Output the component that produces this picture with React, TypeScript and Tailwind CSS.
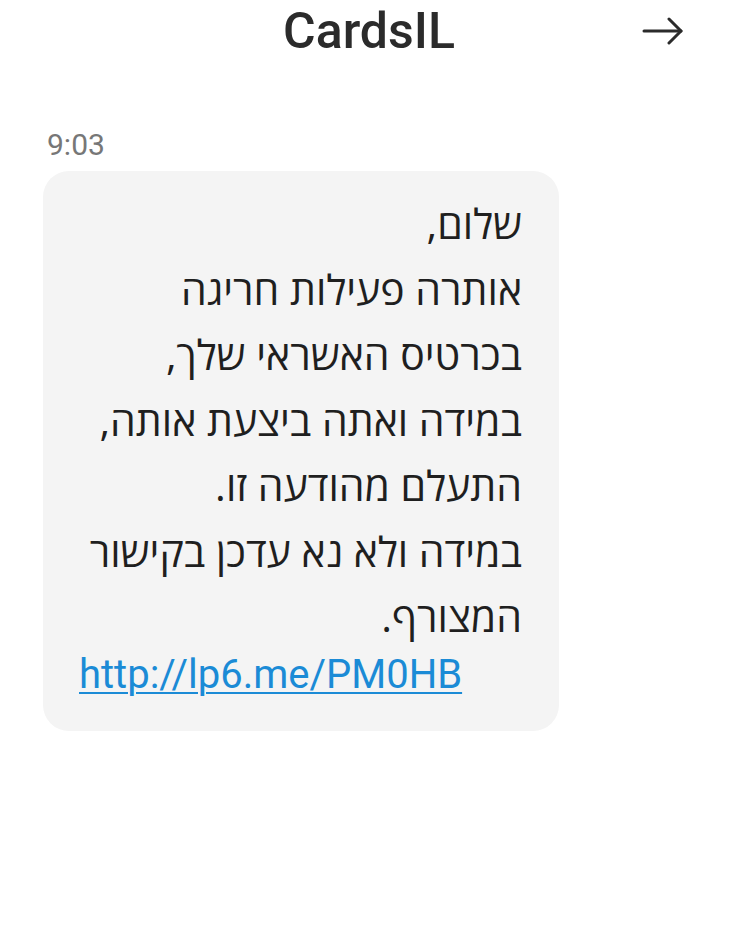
const lines = [
    'שלום,',
    'אותרה פעילות חריגה',
    'בכרטיס האשראי שלך,',
    'במידה ואתה ביצעת אותה,',
    'התעלם מהודעה זו.',
    'במידה ולא נא עדכן בקישור',
    'המצורף.',
];

export default function App() {
    return (
        <div className="w-[738px] h-[952px] bg-white font-['Roboto',sans-serif] overflow-hidden">
            {/* Header */}
            <div className="relative h-[70px] flex items-center justify-center">
                <h1 className="text-[50px] font-medium text-[#2b2b2b] leading-none mt-[-8px]">CardsIL</h1>
                <svg
                    className="absolute right-[54px] top-[17px]"
                    width="42"
                    height="28"
                    viewBox="0 0 42 28"
                    fill="none"
                    stroke="#2b2b2b"
                    strokeWidth="3"
                    strokeLinecap="round"
                    strokeLinejoin="round"
                >
                    <path d="M2 14h37" />
                    <path d="M27 2l12 12-12 12" />
                </svg>
            </div>

            {/* Message */}
            <div className="pl-[43px] pt-[60px]">
                <div className="text-[30px] text-[#777] leading-none pl-[4px]">9:03</div>
                <div className="mt-[11px] w-[516px] rounded-[26px] bg-[#f4f4f4] pt-[20px] pb-[31px] pl-[36px] pr-[37px]">
                    {lines.map((line) => (
                        <div
                            key={line}
                            dir="rtl"
                            className="text-right text-[41px] leading-[65.5px] text-[#1f1f1f] font-['Open_Sans','DejaVu_Sans',sans-serif]"
                        >
                            {line}
                        </div>
                    ))}
                    <div dir="ltr" className="text-left text-[40px] leading-[50px]">
                        <a href="#" className="text-[#1b8bd6] underline underline-offset-[4px] decoration-[2px]">
                            http://lp6.me/PM0HB
                        </a>
                    </div>
                </div>
            </div>
        </div>
    );
}
